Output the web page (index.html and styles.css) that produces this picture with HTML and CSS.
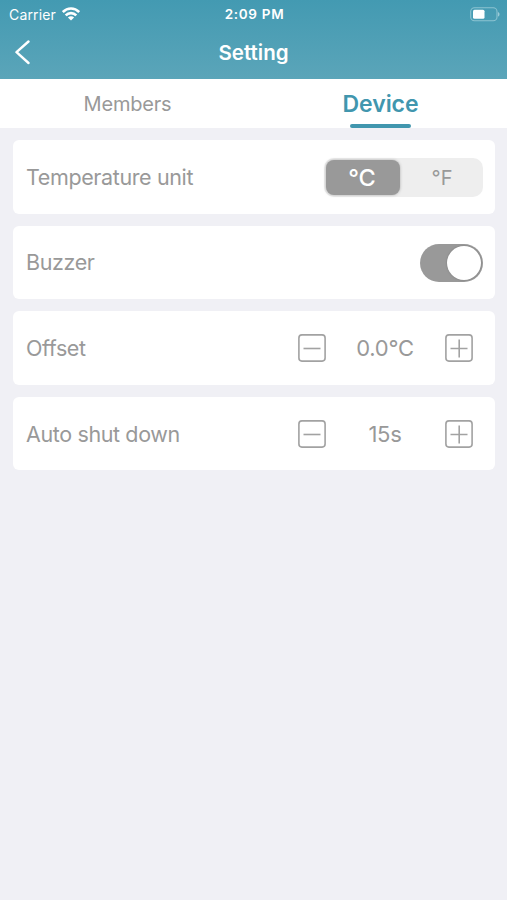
FILE: index.html
```html
<!DOCTYPE html>
<html lang="en">
<head>
<meta charset="utf-8">
<title>Setting</title>
<link rel="stylesheet" href="styles.css">
</head>
<body>
<header class="header">
  <div class="status">
    <div class="status-left">
      <span class="carrier">Carrier</span>
      <svg class="wifi" width="18" height="14" viewBox="0 0 18 14" fill="none" stroke="#fff" stroke-width="2.600">
        <path d="M.8 5C5.400.3 12.600.3 17.200 5"/>
        <path d="M3.700 8.400c3-3.100 7.600-3.100 10.600 0"/>
        <path d="M9 13.600 5.900 10.500c1.800-1.700 4.400-1.700 6.200 0z" fill="#fff" stroke="none"/>
      </svg>
    </div>
    <span class="time">2:09 PM</span>
    <div class="status-right">
      <svg width="31" height="15" viewBox="0 0 31 15">
        <rect x="1.700" y=".7" width="26.300" height="13" rx="3.800" fill="none" stroke="#8cc3d1" stroke-width="1.100"/>
        <rect x="4" y="2.700" width="11.500" height="9" rx="1.500" fill="#fff"/>
        <path d="M29 4.900c2 .8 2 3.800 0 4.600z" fill="#9bcbd8"/>
      </svg>
    </div>
  </div>
  <div class="nav">
    <svg class="back" width="18" height="26" viewBox="0 0 18 26" fill="none" stroke="#fff" stroke-width="2.400" stroke-linecap="round" stroke-linejoin="round"><path d="M14.500 1.500 2.500 12.200l12 10.800"/></svg>
    <h1 class="title">Setting</h1>
    <span></span>
  </div>
</header>
<nav class="tabs">
  <div class="tab"><span>Members</span></div>
  <div class="tab active"><span>Device</span></div>
</nav>
<main class="list">
  <section class="card">
    <span class="label">Temperature unit</span>
    <div class="segment"><span class="option selected">°C</span><span class="option">°F</span></div>
  </section>
  <section class="card">
    <span class="label">Buzzer</span>
    <div class="switch"><span class="knob"></span></div>
  </section>
  <section class="card">
    <span class="label">Offset</span>
    <div class="stepper">
      <svg class="step" viewBox="0 0 28 28"><rect x=".9" y=".9" width="26.200" height="26.200" rx="3"/><path d="M5.500 14.500h17"/></svg>
      <span class="value">0.0°C</span>
      <svg class="step" viewBox="0 0 28 28"><rect x=".9" y=".9" width="26.200" height="26.200" rx="3"/><path d="M5.500 14.500h17M14.200 5.500v18"/></svg>
    </div>
  </section>
  <section class="card">
    <span class="label">Auto shut down</span>
    <div class="stepper">
      <svg class="step" viewBox="0 0 28 28"><rect x=".9" y=".9" width="26.200" height="26.200" rx="3"/><path d="M5.500 14.500h17"/></svg>
      <span class="value">15s</span>
      <svg class="step" viewBox="0 0 28 28"><rect x=".9" y=".9" width="26.200" height="26.200" rx="3"/><path d="M5.500 14.500h17M14.200 5.500v18"/></svg>
    </div>
  </section>
</main>
</body>
</html>
```
FILE: styles.css
```css
* { box-sizing: border-box; }
body {
  margin: 0;
  min-height: 900px;
  background: #f0f0f5;
  color: #999;
  font-family: Inter, "Liberation Sans", sans-serif;
}
.header {
  height: 79px;
  background: linear-gradient(#439ab2, #5ba5b9);
  color: #fff;
}
.status {
  display: grid;
  grid-template-columns: 1fr auto 1fr;
  align-items: center;
  height: 27px;
  padding: 0 7px 0 9px;
  font-size: 14px;
  line-height: 27px;
}
.status-left { display: flex; align-items: center; gap: 6px; }
.carrier { letter-spacing: .15px; }
.time { font-size: 13.5px; font-weight: 600; letter-spacing: .7px; line-height: 28px; }
.status-right { display: flex; justify-content: flex-end; }
.nav {
  display: grid;
  grid-template-columns: 1fr auto 1fr;
  align-items: center;
  height: 52px;
  padding: 0 14px;
}
.title { margin: 0; font-size: 20.5px; font-weight: 600; line-height: 24px; }
.tabs { display: flex; height: 49px; background: #fff; }
.tab {
  display: flex;
  flex: 1;
  flex-direction: column;
  align-items: center;
  justify-content: space-between;
  padding-left: 1px;
  font-size: 20px;
  letter-spacing: -.2px;
  line-height: 50px;
}
.active { padding: 0; color: #4196ae; font-size: 23px; font-weight: 600; letter-spacing: -.05px; }
.active span { height: 45px; }
.active::after {
  width: 61px;
  height: 4px;
  border-radius: 2px;
  background: #4196ae;
  content: "";
}
.list {
  display: flex;
  flex-direction: column;
  gap: 12px;
  padding: 12px 12px 0 12.5px;
}
.card {
  display: flex;
  align-items: center;
  justify-content: space-between;
  height: 73.6px;
  padding: 0 12.5px 0 13.5px;
  border-radius: 6px;
  background: #fff;
  font-size: 22px;
}
.label { font-size: 21.5px; letter-spacing: -.38px; }
.segment {
  display: flex;
  width: 159px;
  height: 39px;
  margin-top: 1px;
  padding: 2px;
  border-radius: 10px;
  background: #eee;
}
.option {
  flex: 1;
  padding-left: 4px;
  border-radius: 8px;
  font-size: 20px;
  line-height: 37px;
  text-align: center;
}
.selected {
  flex: 0 0 74px;
  height: 35px;
  padding: 0 1px 0 0;
  background: #999;
  box-shadow: 0 0 3px #aaa;
  color: #fff;
  font-size: 23.5px;
  font-weight: 500;
  line-height: 36px;
}
.switch {
  display: flex;
  align-items: center;
  justify-content: flex-end;
  width: 63px;
  height: 38px;
  margin-top: 1px;
  padding-right: 2px;
  border-radius: 19px;
  background: #999;
}
.knob {
  width: 34px;
  height: 34px;
  border-radius: 50%;
  background: #fff;
  box-shadow: 0 0 2px #777;
}
.stepper { display: flex; align-items: center; padding-right: 10px; }
.step { width: 28px; height: 28px; fill: none; stroke: #a2a2a2; stroke-width: 1.6; }
.value { width: 119px; text-align: center; letter-spacing: -.3px; }
```
